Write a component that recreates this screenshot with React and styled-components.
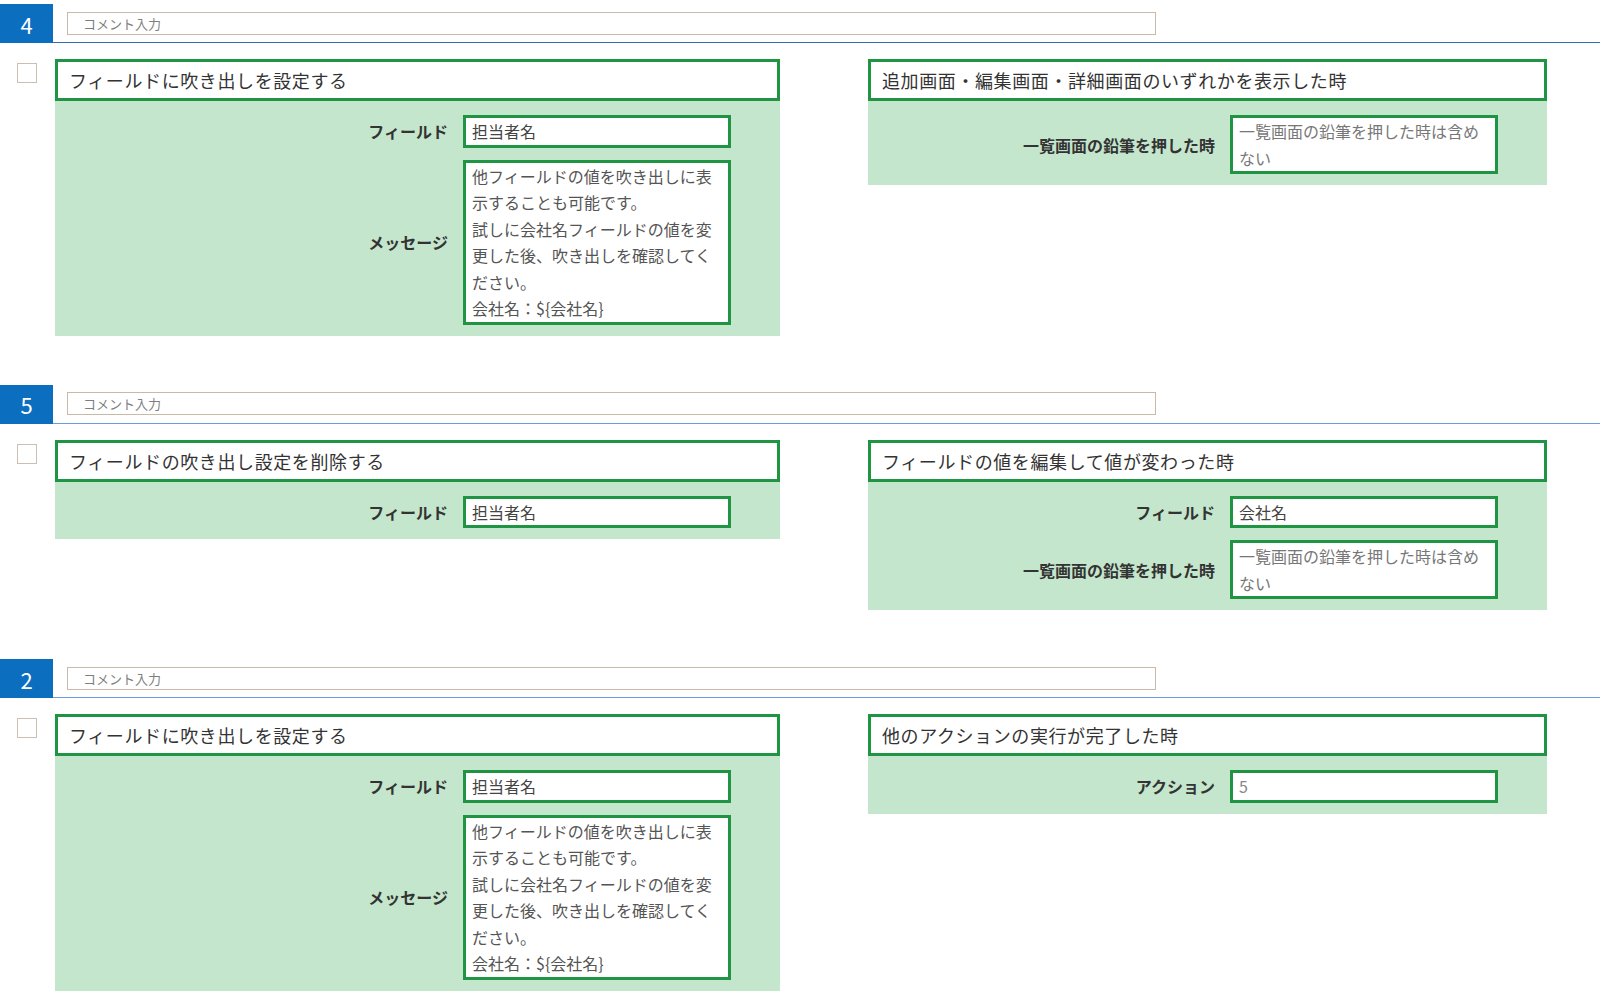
import styled, { createGlobalStyle } from "styled-components";

const GlobalStyle = createGlobalStyle`
    body {
        margin: 0;
        background: #ffffff;
        font-family: "Noto Sans CJK JP", "Noto Sans", sans-serif;
        color: #333333;
    }
`;

const Page = styled.div`
    padding-top: 4px;
`;

const Block = styled.section`
    margin-bottom: 49px;
`;

const HeadRow = styled.div`
    display: flex;
    align-items: center;
    height: 38px;
    border-bottom: 1px solid ${(p) => (p.$active ? "#2f6db0" : "#6d9be0")};
`;

const Badge = styled.div`
    width: 53px;
    align-self: stretch;
    margin-bottom: -1px;
    background: #0b6ebf;
    color: #ffffff;
    font-size: 22px;
    display: flex;
    align-items: center;
    justify-content: center;
`;

const CommentInput = styled.input`
    margin-left: 14px;
    width: 1089px;
    height: 23px;
    box-sizing: border-box;
    border: 1px solid #c9b9a6;
    padding: 0 15px;
    font-family: inherit;
    font-size: 13px;
    color: #555555;
    outline: none;

    &::placeholder {
        color: #7e7e7e;
    }
`;

const Content = styled.div`
    display: flex;
    margin-top: 16px;
`;

const CheckCell = styled.div`
    width: 55px;
    flex: none;
`;

const Check = styled.div`
    width: 20px;
    height: 20px;
    box-sizing: border-box;
    margin: 4px 0 0 17px;
    border: 1px solid #cbbfb2;
    background: #ffffff;
`;

const Panel = styled.div`
    width: ${(p) => p.$width}px;
    flex: none;
    margin-right: ${(p) => p.$gap || 0}px;
    align-self: flex-start;
`;

const PanelHead = styled.div`
    height: 42px;
    box-sizing: border-box;
    border: 3px solid #1f9443;
    background: #ffffff;
    display: flex;
    align-items: center;
    padding-left: 11px;
    font-size: 18px;
    letter-spacing: 0.6px;
    color: #333333;
`;

const PanelBody = styled.div`
    background: #c4e6cc;
    padding: 14px 49px 11px 0;
    display: flex;
    flex-direction: column;
    align-items: flex-end;
    gap: 12px;
`;

const Row = styled.div`
    display: flex;
    align-items: center;
`;

const Label = styled.div`
    font-size: 16px;
    font-weight: bold;
    color: #333333;
    margin-right: 15px;
`;

const Field = styled.div`
    width: 268px;
    box-sizing: border-box;
    border: 3px solid #1f9443;
    background: #ffffff;
    padding: 0 6px;
    font-size: 16px;
    line-height: 26.5px;
    white-space: pre-wrap;
    color: ${(p) => p.$tone || "#444444"};
`;

const message =
    "他フィールドの値を吹き出しに表\n示することも可能です。\n試しに会社名フィールドの値を変\n更した後、吹き出しを確認してく\nださい。\n会社名：${会社名}";

const pencil = "一覧画面の鉛筆を押した時は含め\nない";

const data = [
    {
        no: 4,
        active: true,
        left: {
            title: "フィールドに吹き出しを設定する",
            rows: [
                { label: "フィールド", value: "担当者名" },
                { label: "メッセージ", value: message, tone: "#555555" },
            ],
        },
        right: {
            title: "追加画面・編集画面・詳細画面のいずれかを表示した時",
            rows: [{ label: "一覧画面の鉛筆を押した時", value: pencil, tone: "#777777" }],
        },
    },
    {
        no: 5,
        left: {
            title: "フィールドの吹き出し設定を削除する",
            rows: [{ label: "フィールド", value: "担当者名" }],
        },
        right: {
            title: "フィールドの値を編集して値が変わった時",
            rows: [
                { label: "フィールド", value: "会社名" },
                { label: "一覧画面の鉛筆を押した時", value: pencil, tone: "#777777" },
            ],
        },
    },
    {
        no: 2,
        left: {
            title: "フィールドに吹き出しを設定する",
            rows: [
                { label: "フィールド", value: "担当者名" },
                { label: "メッセージ", value: message, tone: "#555555" },
            ],
        },
        right: {
            title: "他のアクションの実行が完了した時",
            rows: [{ label: "アクション", value: "5", tone: "#888888" }],
        },
    },
];

const Card = ({ title, rows, width, gap }) => (
    <Panel $width={width} $gap={gap}>
        <PanelHead>{title}</PanelHead>
        <PanelBody>
            {rows.map((r, i) => (
                <Row key={i}>
                    <Label>{r.label}</Label>
                    <Field $tone={r.tone}>{r.value}</Field>
                </Row>
            ))}
        </PanelBody>
    </Panel>
);

const App = () => {
    return (
        <Page>
            <GlobalStyle />
            {data.map((b) => (
                <Block key={b.no}>
                    <HeadRow $active={b.active}>
                        <Badge>{b.no}</Badge>
                        <CommentInput placeholder="コメント入力" />
                    </HeadRow>
                    <Content>
                        <CheckCell>
                            <Check />
                        </CheckCell>
                        <Card {...b.left} width={725} gap={88} />
                        <Card {...b.right} width={679} />
                    </Content>
                </Block>
            ))}
        </Page>
    );
};

export default App;
